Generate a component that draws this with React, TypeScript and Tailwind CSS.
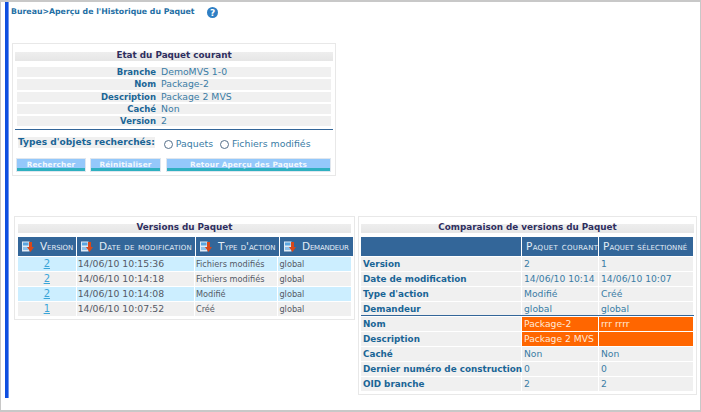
const font = { fontFamily: '"DejaVu Sans", Verdana, sans-serif' };

function SortIcon() {
  return (
    <svg width="12" height="12" viewBox="0 0 12 12" className="shrink-0">
      <rect x="0" y="0.5" width="7.5" height="10" fill="#dfeaf5" />
      <rect x="1" y="1.5" width="5.5" height="3" fill="#5aa5e0" />
      <rect x="1" y="6" width="5.5" height="3" fill="#8cc0ea" />
      <path d="M7 1h3v5h2l-3.500 5L5 6h2z" fill="#d8481a" />
    </svg>
  );
}

function PanelTitle({ children, className }: { children: string; className: string }) {
  return (
    <div className={`bg-gradient-to-b from-[#eeeeee] to-[#e6e6e6] text-center font-bold text-[8.800px] leading-[6px] text-[#2f2f5f] ${className}`}>
      {children}
    </div>
  );
}

function Head({ label, icon, w, track }: { label: string; icon?: boolean; w: string; track: string }) {
  return (
    <div className={`${w} ${track} shrink-0 bg-[#336699] flex items-center pl-1 gap-[6px] h-[19px] [font-variant:small-caps] text-[10.500px] text-[#e3edf6] whitespace-nowrap overflow-hidden`}>
      {icon && <SortIcon />}
      {label}
    </div>
  );
}

const stateRows = [
  ["Branche", "DemoMVS 1-0"],
  ["Nom", "Package-2"],
  ["Description", "Package 2 MVS"],
  ["Caché", "Non"],
  ["Version", "2"],
];

const versions = [
  ["2", "14/06/10 10:15:36", "Fichiers modifiés", "global", "bg-[#cceeff]"],
  ["2", "14/06/10 10:14:18", "Fichiers modifiés", "global", "bg-[#f0f0f0]"],
  ["2", "14/06/10 10:14:08", "Modifié", "global", "bg-[#cceeff]"],
  ["1", "14/06/10 10:07:52", "Créé", "global", "bg-[#f0f0f0]"],
];

const compareTop = [
  ["Version", "2", "1"],
  ["Date de modification", "14/06/10 10:14", "14/06/10 10:07"],
  ["Type d'action", "Modifié", "Créé"],
  ["Demandeur", "global", "global"],
];

const compareBottom = [
  ["Nom", "Package-2", "rrr rrrr", true],
  ["Description", "Package 2 MVS", "", true],
  ["Caché", "Non", "Non", false],
  ["Dernier numéro de construction", "0", "0", false],
  ["OID branche", "2", "2", false],
] as const;

function CompareRow({ label, a, b, diff }: { label: string; a: string; b: string; diff?: boolean }) {
  const cell = diff ? "bg-[#ff6600] text-[#ffe9d8]" : "bg-[#f0f0f0] text-[#3a7ca5]";
  return (
    <div className="flex gap-px h-[14px] leading-[14px] text-[9.200px]">
      <div className="w-[160px] shrink-0 bg-[#f0f0f0] pl-0.5 font-bold text-[8.800px] text-[#1a6596] whitespace-nowrap">{label}</div>
      <div className={`w-[76px] shrink-0 pl-0.5 whitespace-nowrap ${cell}`}>{a}</div>
      <div className={`w-[94px] shrink-0 pl-0.5 whitespace-nowrap ${cell}`}>{b}</div>
    </div>
  );
}

function FormButton({ label, w }: { label: string; w: string }) {
  return (
    <div className={`${w} h-[14px] border border-[#dfe6ee] bg-gradient-to-b from-[#94c8fb] from-75% to-[#2fb0c0] to-75% text-center text-[7.300px] leading-[11px] font-bold tracking-[0.2px] text-[#f2f8fd]`}>
      {label}
    </div>
  );
}

function Radio({ label }: { label: string }) {
  return (
    <span className="flex items-center gap-[3px]">
      <span className="w-[9px] h-[9px] rounded-full border border-[#56708a] bg-white" />
      {label}
    </span>
  );
}

export default function App() {
  return (
    <div style={font} className="relative w-[701px] h-[412px] bg-white overflow-hidden border border-[#c8c8c8] border-t-2 border-b-2 pl-1">
      <div className="absolute left-[4px] top-0 bottom-[12px] w-[4px] bg-[#0f4fe0] border-r border-r-[#6f97ee]" />
      <div className="pl-[6px]">
        {/* Breadcrumb */}
        <div className="flex items-center h-[16px] mt-[2px]">
          <span className="text-[7.800px] font-bold text-[#1f6fa5] whitespace-nowrap">Bureau&gt;Aperçu de l'Historique du Paquet</span>
          <svg width="11" height="11" viewBox="0 0 11 11" className="ml-[12px]">
            <circle cx="5.500" cy="5.500" r="5.500" fill="#2f7fc4" />
            <text x="5.500" y="8.800" textAnchor="middle" fontSize="9" fontWeight="700" fill="#fff" fontFamily="DejaVu Sans">?</text>
          </svg>
        </div>

        {/* Etat du Paquet courant */}
        <div className="mt-[23px] ml-px w-[324px] h-[133px] border border-[#e8e8e8] px-[2px] pt-[8px]">
          <PanelTitle className="h-[9px] mb-[6px]">Etat du Paquet courant</PanelTitle>
          <div className="flex flex-col gap-[2px] px-[2px]">
            {stateRows.map(([k, v]) => (
              <div key={k} className="flex h-[10.300px] bg-[#f0f0f0] leading-[10.300px] text-[9.300px]">
                <div className="w-[139px] text-right font-bold text-[8.500px] text-[#1a6596]">{k}</div>
                <div className="pl-[5px] text-[#3a7ca5]">{v}</div>
              </div>
            ))}
          </div>
          <div className="mt-[3px] border-t border-t-[#336699]" />
          <div className="flex items-center mt-[4px] pl-[3px] h-[16px] text-[9.400px] text-[#3a7ca5]">
            <span className="font-bold text-[9.100px] text-[#1a6596] bg-[#f0f0f0] h-[11px] leading-[11px] whitespace-nowrap">Types d'objets recherchés:</span>
            <span className="flex gap-[7px] ml-[9px] mt-[4px] whitespace-nowrap">
              <Radio label="Paquets" />
              <Radio label="Fichiers modifiés" />
            </span>
          </div>
          <div className="flex gap-[4px] mt-[8px] pl-[1px]">
            <FormButton label="Rechercher" w="w-[70px]" />
            <FormButton label="Réinitialiser" w="w-[71px]" />
            <div className="ml-px">
              <FormButton label="Retour Aperçu des Paquets" w="w-[165px]" />
            </div>
          </div>
        </div>

        <div className="flex items-start gap-[3px] mt-[40px] ml-[3px]">
          {/* Versions du Paquet */}
          <div className="w-[341px] h-[104px] border border-[#e8e8e8] px-[3px] pt-[7px]">
            <PanelTitle className="h-[9px] mb-[4px]">Versions du Paquet</PanelTitle>
            <div className="flex gap-px mb-px">
              <Head label="Version" icon w="w-[58px]" track="tracking-[-0.1px]" />
              <Head label="Date de modification" icon w="w-[118px]" track="tracking-[0.2px]" />
              <Head label="Type d'action" icon w="w-[83px]" track="tracking-[0px]" />
              <Head label="Demandeur" icon w="w-[73px]" track="tracking-[-0.2px]" />
            </div>
            <div className="flex flex-col gap-px">
              {versions.map((r, i) => (
                <div key={i} className="flex gap-px h-[14px] leading-[14px] text-[8.200px] text-[#555a66]">
                  <div className={`w-[58px] text-center text-[#3aa5d8] underline text-[10px] ${r[4]}`}>{r[0]}</div>
                  <div className={`w-[118px] pl-px text-[9.300px] ${r[4]}`}>{r[1]}</div>
                  <div className={`w-[83px] pl-px whitespace-nowrap ${r[4]}`}>{r[2]}</div>
                  <div className={`w-[73px] pl-px ${r[4]}`}>{r[3]}</div>
                </div>
              ))}
            </div>
          </div>

          {/* Comparaison de versions du Paquet */}
          <div className="w-[339px] h-[179px] border border-[#e8e8e8] px-[2px] pt-[7px]">
            <PanelTitle className="h-[9px] mb-[4px]">Comparaison de versions du Paquet</PanelTitle>
            <div className="flex gap-px mb-px">
              <Head label="" w="w-[160px]" track="tracking-[0px]" />
              <Head label="Paquet courant" w="w-[76px]" track="tracking-[0.3px]" />
              <Head label="Paquet sélectionné" w="w-[94px]" track="tracking-[0.1px]" />
            </div>
            <div className="flex flex-col gap-px">
              {compareTop.map(([l, a, b]) => (
                <CompareRow key={l} label={l} a={a} b={b} />
              ))}
            </div>
            <div className="-mt-px mb-px border-t border-t-[#336699] relative" />
            <div className="flex flex-col gap-px">
              {compareBottom.map(([l, a, b, d]) => (
                <CompareRow key={l} label={l} a={a} b={b} diff={d} />
              ))}
            </div>
          </div>
        </div>
      </div>
    </div>
  );
}
